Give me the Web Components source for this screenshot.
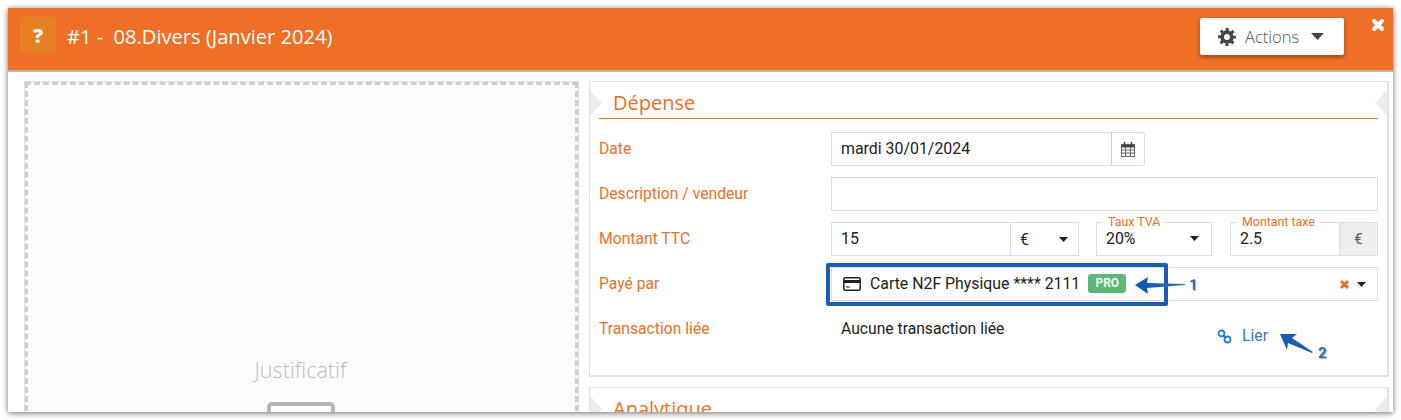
<!DOCTYPE html>
<html lang="fr"><head><meta charset="utf-8"><title>Dépense</title>
<style>
html,body{margin:0;padding:0;background:#fff;overflow:hidden}
body{font-family:Roboto,"Liberation Sans",sans-serif;height:420px}
</style></head><body>
<app-modal>
  <modal-header slot="header" heading="#1 -&nbsp; 08.Divers (Janvier 2024)"></modal-header>
  <upload-box slot="left"></upload-box>
  <form-card slot="right" heading="Dépense" style="height:296px">
    <form-row label="Date">
      <div style="display:flex;width:314px">
        <text-field grow value="mardi 30/01/2024"></text-field>
        <addon-box></addon-box>
      </div>
    </form-row>
    <form-row label="Description / vendeur"><text-field grow></text-field></form-row>
    <form-row label="Montant TTC">
      <div style="display:flex;width:100%">
        <text-field value="15" style="width:179px" joined></text-field>
        <select-field value="€" style="width:69px"></select-field>
        <legend-field legend="Taux TVA" value="20%" caret style="width:116px;margin-left:17px"></legend-field>
        <legend-field legend="Montant taxe" value="2.5" unit="€" style="width:148px;margin-left:18px"></legend-field>
      </div>
    </form-row>
    <form-row label="Payé par"><pay-select></pay-select></form-row>
    <form-row label="Transaction liée"><link-row></link-row></form-row>
  </form-card>
  <form-card slot="right" heading="Analytique" style="height:120px;margin-top:10px"></form-card>
  <note-arrows slot="over"></note-arrows>
</app-modal>
<script>
const def=(n,html,init)=>customElements.define(n,class extends HTMLElement{
  connectedCallback(){ if(this.shadowRoot)return; const r=this.attachShadow({mode:'open'});
    r.innerHTML=typeof html==='function'?html(this):html; init&&init(r,this);} });
const caret=(c='#222')=>`<svg width="9" height="5" viewBox="0 0 9 5" style="display:block"><path d="M0 0h9L4.500 5z" fill="${c}"/></svg>`;

def('app-modal',`<style>
:host{display:block;position:relative;margin:8px;width:1385px;height:404px;background:#fff;box-shadow:0 1px 6px rgba(0,0,0,.6)}
.wrap{width:1385px;height:404px;overflow:hidden}
.body{display:flex;padding:9px 3px 0 16px}
.l{width:555px;flex:none}.r{width:800px;margin-left:10px;flex:none}
</style>
<div class="wrap"><slot name="header"></slot>
<div class="body"><div class="l"><slot name="left"></slot></div><div class="r"><slot name="right"></slot></div></div></div>
<slot name="over"></slot>`);

def('modal-header',h=>`<style>
:host{display:flex;align-items:flex-start;height:62px;background:#ef6f26;border-bottom:2px solid #b9b9b9;position:relative;color:#fff;font-family:"Open Sans",sans-serif}
.q{width:36px;height:36px;margin:9px 0 0 12px;border-radius:4px;background:#e67e22;display:flex;align-items:center;justify-content:center;font:800 20px "Open Sans",sans-serif}
h1{font-weight:400;font-size:20.100px;line-height:28px;margin:15px 0 0 11px;white-space:nowrap}
.a{margin:10px 49px 0 auto;width:144px;height:37px;box-sizing:border-box;background:#fff;border-radius:2px;box-shadow:0 2px 4px rgba(0,0,0,.4);color:#555;display:flex;align-items:center;font-size:16.500px;font-weight:300}
.a svg.g{margin-left:18px;margin-right:9px}
.a .c{margin-left:12px}
.x{position:absolute;right:8px;top:10px}
</style>
<div class="q">?</div><h1>${h.getAttribute('heading')}</h1>
<div class="a"><svg class="g" width="18" height="18" viewBox="0 0 24 24" fill="none" stroke="#444"><circle cx="12" cy="12" r="6.500" stroke-width="5"/><circle cx="12" cy="12" r="10" stroke-width="4" stroke-dasharray="3.900 3.954" stroke-dashoffset="1.950"/></svg><span>Actions</span><span class="c"><svg width="13" height="7" viewBox="0 0 13 7" style="display:block"><path d="M0 0h13L6.500 7z" fill="#444"/></svg></span></div>
<svg class="x" width="14" height="14" viewBox="0 0 14 14"><path d="M3 3l8 8M11 3l-8 8" stroke="#fff" stroke-width="4" stroke-linecap="round"/></svg>`);

def('upload-box',`<style>
:host{display:block;height:340px;box-sizing:border-box;border:1px solid #dcdcdc;background:#fff}
.d{height:100%;box-sizing:border-box;border:3px dashed #cfcfcf;background:#fcfcfc;display:flex;flex-direction:column;align-items:center;padding:270px 2px 0 0;color:#bdbdbd;font:300 21.600px/30px "Open Sans",sans-serif}
.i{width:68px;height:40px;box-sizing:border-box;border:4px solid #b5b5b5;border-radius:5px;background:#fff;margin-top:17px;flex:none}
</style><div class="d"><span>Justificatif</span><div class="i"></div></div>`);

def('form-card',h=>`<style>
:host{display:block;position:relative;box-sizing:border-box;background:#fff;border:1px solid #e2e2e2;border-bottom-width:2px;border-right-width:2px;padding:0 9px 0 9px;overflow:hidden}
h2{font:400 20px/26px "Open Sans",sans-serif;color:#ef6f26;margin:0 0 13px;height:37px;box-sizing:border-box;padding:8px 0 0 14px;border-bottom:1px solid #ef6f26}
.t{position:absolute;top:8px;width:0;height:0;border-top:13px solid transparent;border-bottom:13px solid transparent}
.tl{left:0;border-left:12px solid #ececec}.tr{right:0;border-right:12px solid #ececec}
.rows{display:flex;flex-direction:column;gap:11px}
</style><div class="t tl"></div><div class="t tr"></div><h2>${h.getAttribute('heading')}</h2><div class="rows"><slot></slot></div>`);

def('form-row',h=>`<style>
:host{display:flex;height:34px;align-items:center}
label{width:232px;flex:none;font:15.700px Roboto,sans-serif;color:#ef6f26;margin-top:-1px}
.c{flex:1;display:flex;min-width:0;height:100%}
</style><label>${h.getAttribute('label')}</label><div class="c"><slot></slot></div>`);

const fieldCss=`box-sizing:border-box;height:34px;border:1px solid #dedede;background:#fff;font:15.900px Roboto,sans-serif;color:#222;`;
def('text-field',h=>`<style>
:host{display:flex;align-items:center;${fieldCss}padding:0 0 1px 9px;${h.hasAttribute('joined')?'border-right:0;':''}}
:host([grow]){flex:1}
</style>${h.getAttribute('value')||''}`);
def('select-field',h=>`<style>
:host{display:flex;align-items:center;justify-content:space-between;${fieldCss}padding:0 10px 0 9px}
</style><span>${h.getAttribute('value')}</span>${caret()}`);
def('addon-box',`<style>
:host{display:flex;align-items:center;justify-content:center;box-sizing:border-box;width:34px;height:34px;border:1px solid #dedede;border-left-color:#d0d0d0;margin-left:-1px;border-radius:0 3px 3px 0;background:#fff}
</style><svg width="16" height="17" viewBox="0 0 16 17"><rect x="1" y="3" width="14" height="3.500" fill="#444"/><path d="M1.500 3.500h13v12h-13zM1.500 9h13M1.500 12h13M5.500 6v9.500M10.500 6v9.500" fill="none" stroke="#666" stroke-width="1"/><path d="M4.500 1v3M11.500 1v3" stroke="#444" stroke-width="1.500"/></svg>`);
def('legend-field',h=>`<style>
:host{display:flex;position:relative;${fieldCss}}
.v{flex:1;padding:0 12px 1px 9px;display:flex;align-items:center;justify-content:space-between}
.lg{position:absolute;left:6px;top:-8px;padding:0 5px;background:#fff;color:#ef6f26;font:12.400px/14px Roboto,sans-serif;white-space:nowrap}
.u{width:37px;background:#eee;border-left:1px solid #dedede;display:flex;align-items:center;justify-content:center;color:#555;border-radius:0 3px 3px 0;font-size:15px}
</style><span class="lg">${h.getAttribute('legend')}</span><div class="v"><span>${h.getAttribute('value')}</span>${h.hasAttribute('caret')?caret():''}</div>${h.getAttribute('unit')?`<div class="u">${h.getAttribute('unit')}</div>`:''}`);
def('pay-select',`<style>
:host{flex:1;display:flex;align-items:center;${fieldCss}padding:0 11px 0 11px;font-size:15.850px;color:#1c1c1c}
svg.card{margin-right:9px;flex:none}
.t{padding-bottom:2px}
.b{margin:-1px 0 0 8px;background:#5cb874;color:#eaf7ee;font:700 12px/19px Roboto,sans-serif;height:19px;width:38px;text-align:center;border-radius:3px}
.x{margin-left:auto;margin-right:7px}
</style><svg class="card" width="18" height="14" viewBox="0 0 18 14"><rect x=".8" y=".8" width="16.400" height="12.400" rx="1.500" fill="none" stroke="#222" stroke-width="1.500"/><rect x="1" y="3" width="16" height="3" fill="#222"/><path d="M3 10h4" stroke="#222"/></svg><span class="t">Carte N2F Physique **** 2111</span><span class="b">PRO</span>
<svg class="x" width="11" height="11" viewBox="0 0 11 11"><path d="M2 2l7 7M9 2l-7 7" stroke="#ef6f26" stroke-width="3"/></svg>${caret()}`);
def('link-row',`<style>
:host{flex:1;display:flex;font:15.700px/18px Roboto,sans-serif;color:#222;padding:8px 0 0 10px;height:34px;box-sizing:border-box}
.l{margin:7px 110px 0 auto;display:flex;align-items:center;color:#2e79d8;height:18px}
svg{margin-right:10px}
</style><span>Aucune transaction liée</span><div class="l"><svg width="15" height="15" viewBox="0 0 15 15" fill="none" stroke="#2e79d8" stroke-width="1.800"><circle cx="4.500" cy="4.500" r="3"/><circle cx="10.500" cy="10.500" r="3"/><path d="M6 6l3 3"/></svg><span>Lier</span></div>`);
def('note-arrows',`<style>
:host{position:absolute;left:-8px;top:-8px;width:1401px;height:420px;pointer-events:none;display:block}
.box{position:absolute;left:826px;top:263px;width:342px;height:43px;box-sizing:border-box;border:4px solid #1c5cb3;border-radius:2px}
.n{position:absolute;font:700 15px Roboto,sans-serif;color:#2a6cc0;text-shadow:1px 1px 0 #bbb}
svg{position:absolute;left:0;top:0}
</style><div class="box"></div>
<svg width="1401" height="420"><defs><linearGradient id="g" x1="0" x2="1"><stop offset="0" stop-color="#0e52b0"/><stop offset="1" stop-color="#2c6fc4"/></linearGradient></defs>
<path d="M1135 285l13-8-1 6 38 1v1l-38 3 1 6z" fill="url(#g)"/>
<path d="M1280 334l17 0-5 4 21 14-1 1-24-10-1 7z" fill="#1c5cb3"/></svg>
<span class="n" style="left:1189px;top:276px">1</span><span class="n" style="left:1318px;top:344px">2</span>`);
</script>
</body></html>
